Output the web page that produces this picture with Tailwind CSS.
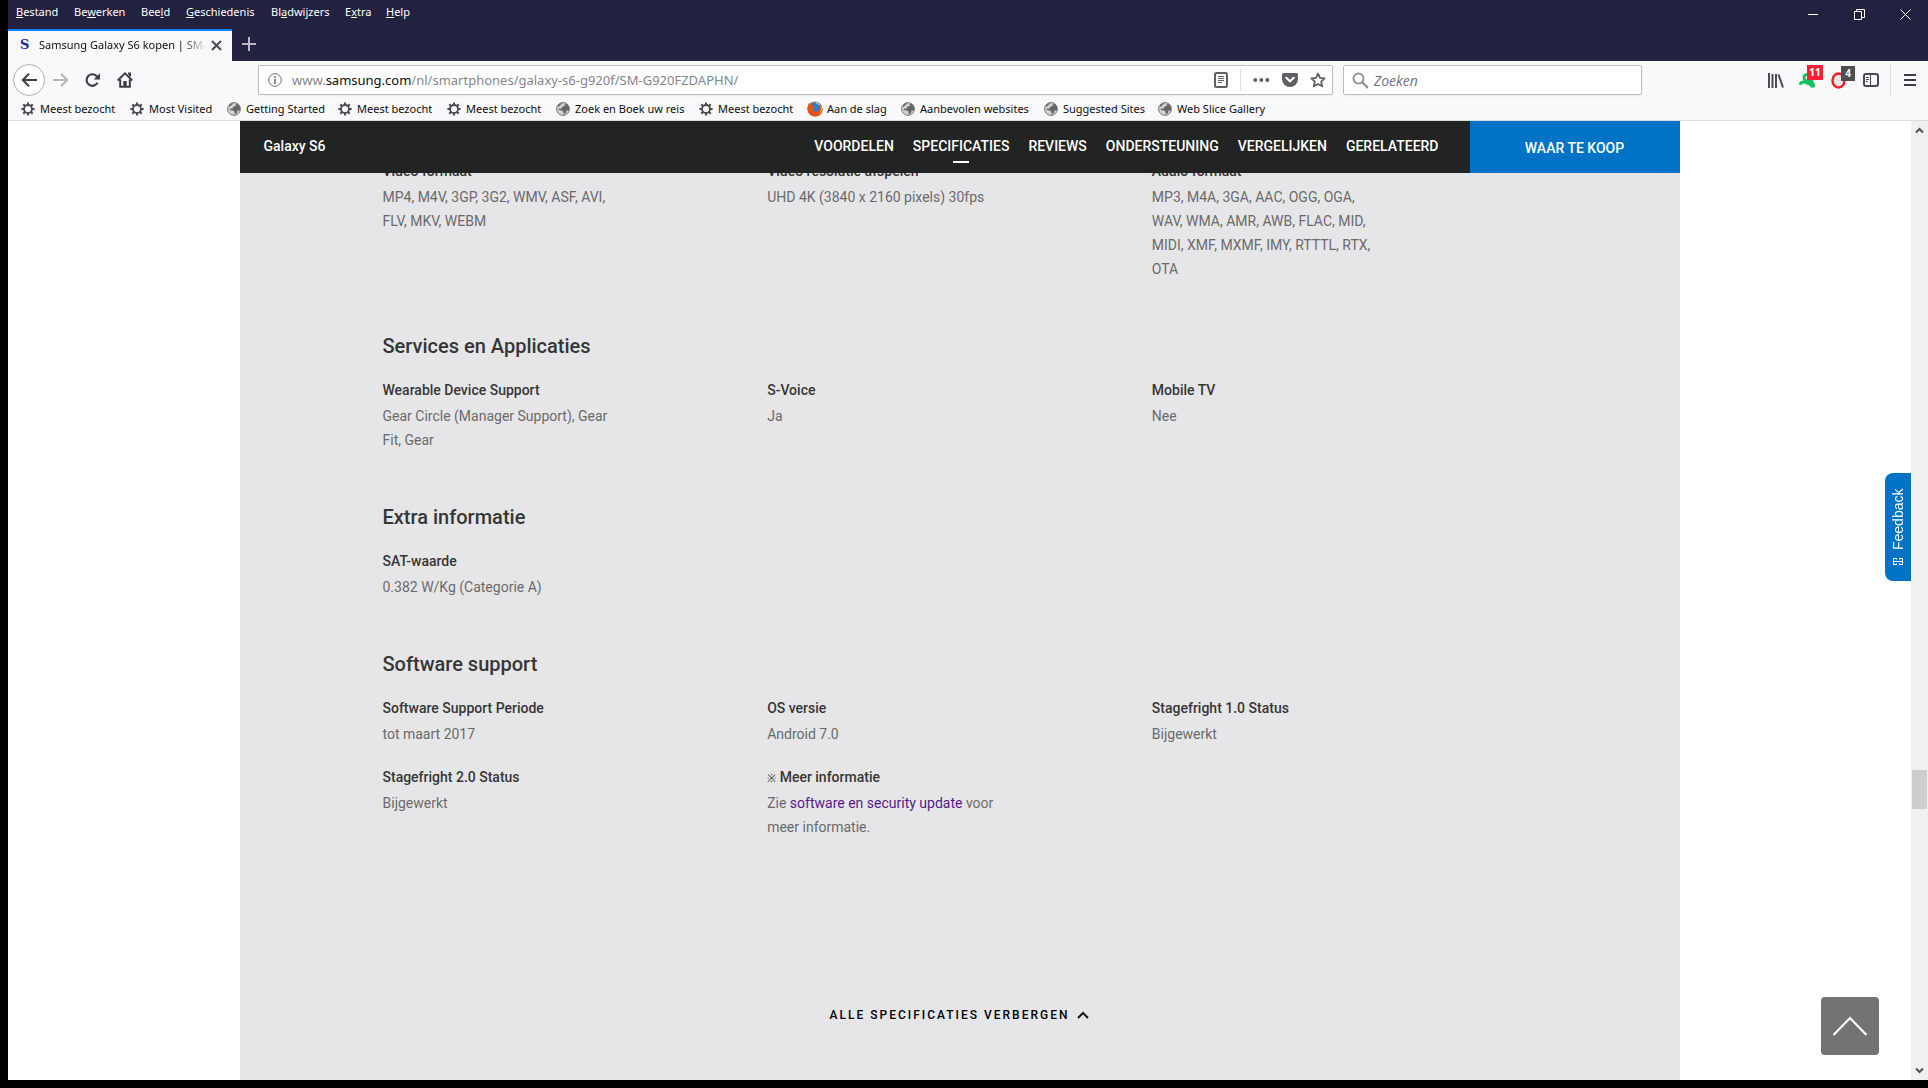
<!DOCTYPE html>
<html lang="nl">
<head>
<meta charset="utf-8">
<title>Samsung Galaxy S6 kopen | SM-G920FZDAPHN</title>
<script src="https://cdn.jsdelivr.net/npm/@tailwindcss/browser@4"></script>
</head>
<body class="bg-black">
<svg class="hidden">
  <symbol id="gear" viewBox="0 0 14 14"><circle cx="7" cy="7" r="4" fill="none" stroke="#4a4a4f" stroke-width="1.8"/><path d="M7 .4v2.4M7 11.2v2.4M.4 7h2.4M11.2 7h2.4M2.3 2.3L4 4M10 10l1.700 1.700M2.300 11.700L4 10M10 4l1.700-1.700" stroke="#4a4a4f" stroke-width="2"/></symbol>
  <symbol id="globe" viewBox="0 0 14 14"><circle cx="7" cy="7" r="6.400" fill="#d2d2d2" stroke="#777" stroke-width="1"/><path d="M2 3.500C3.500 1.500 5 .9 6.500 1L5 2.500 3.500 4 2 5zM8.500 2.500l2-1 2.500 3.300v4l-2.500-.3-.5 2.600-2.500 1.600L7.800 10 6 8.600 2.500 8 3 6.800 5.500 6.600 6.500 4.500 8.800 4z" fill="#666"/></symbol>
  <symbol id="firefox" viewBox="0 0 16 16"><circle cx="8" cy="8" r="7.600" fill="#e8641b"/><circle cx="8.500" cy="6.500" r="5.600" fill="#2f7fc4"/><path d="M8 1c3 0 5 2 5.500 4L10 3z" fill="#8fd0f0"/><path d="M.8 5C1 3.500 2 2.300 2.600 1.800c0 1 .4 1.600 1 2 1-.3 2 0 2.600.6-1 .8-.6 1.800.8 1.800-.8 2-1.600 1.800-1.300 2.900.7 2.100 4.200 2 5.800.3 1.500-1.600 1.500-3.800 1-5.400C16 7 16.300 10 14 13c-2.500 3-7.500 3.200-10.500.8C.5 11.500.1 8 .8 5z" fill="#e2531a"/><path d="M14.800 5c.8 3-.3 6.500-3 8 2-2.500 2.400-4.500 2-7z" fill="#ffc23c"/></symbol>
</svg>
<div class="flex h-screen flex-col overflow-hidden bg-black pb-2 pl-2 font-['Noto_Sans',sans-serif] text-[11px]">
  <header class="shrink-0 bg-[#222140]">
    <div class="flex h-[29px] items-start justify-between">
      <nav aria-label="Menubalk" class="grid h-6 grid-cols-[58px_67px_45px_85px_74px_41px_auto] items-center pl-2 text-white">
        <button class="text-left whitespace-nowrap"><u>B</u>estand</button>
        <button class="text-left whitespace-nowrap">Be<u>w</u>erken</button>
        <button class="text-left whitespace-nowrap">Bee<u>l</u>d</button>
        <button class="text-left whitespace-nowrap"><u>G</u>eschiedenis</button>
        <button class="text-left whitespace-nowrap">Bl<u>a</u>dwijzers</button>
        <button class="text-left whitespace-nowrap">E<u>x</u>tra</button>
        <button class="text-left whitespace-nowrap"><u>H</u>elp</button>
      </nav>
      <div class="flex h-7 items-center">
        <button aria-label="Minimaliseren" class="flex w-[46px] justify-center"><svg width="10" height="10"><path d="M0 5.500h10" stroke="#fff"/></svg></button>
        <button aria-label="Verkleinen" class="flex w-[46px] justify-center"><svg width="11" height="11" fill="none" stroke="#fff"><path d="M.5 2.500h7v8h-7zM2.500 2.500v-2h8v8h-3"/></svg></button>
        <button aria-label="Sluiten" class="flex w-[46px] justify-center"><svg width="11" height="11"><path d="M.5.5l10 10M10.500.5l-10 10" stroke="#fff"/></svg></button>
      </div>
    </div>
    <div class="flex h-8">
      <div class="flex w-56 items-center border-t-2 border-[#0a84ff] bg-[#f9f9fb] pr-[10px] pb-0.5 pl-3">
        <span class="w-[19px] shrink-0 font-['DejaVu_Serif',serif] text-[13px] font-bold text-[#1428a0]">S</span>
        <span class="min-w-0 flex-1 overflow-hidden bg-linear-to-r from-[#0c0c0d] from-85% to-transparent bg-clip-text whitespace-nowrap text-transparent">Samsung Galaxy S6 kopen | SM-</span>
        <button aria-label="Tabblad sluiten" class="ml-1"><svg width="11" height="11"><path d="M1 1l9 9M10 1l-9 9" stroke="#4a4a4f" stroke-width="2"/></svg></button>
      </div>
      <button aria-label="Nieuw tabblad" class="flex w-[34px] items-center justify-center pb-0.5"><svg width="14" height="14"><path d="M7 0v14M0 7h14" stroke="#b9b9c6" stroke-width="2"/></svg></button>
    </div>
  </header>
  <div class="shrink-0 border-b border-[#dcdcdf] bg-[#f9f9fb] text-[#0c0c0d]">
    <div class="flex h-[38px] items-center pr-3 pl-[5px]">
      <button aria-label="Terug" class="flex size-8 items-center justify-center rounded-full border border-[#b1b1b3] bg-white"><svg width="17" height="14" fill="none" stroke="#3e3e42" stroke-width="2"><path d="M16 7H1.500M8 .800L1.800 7 8 13.200"/></svg></button>
      <button aria-label="Vooruit" class="ml-2 flex w-4 justify-center"><svg width="16" height="14" fill="none" stroke="#b5b5b8" stroke-width="2"><path d="M0 7h14.500M8 .800L14.200 7 8 13.200"/></svg></button>
      <button aria-label="Vernieuwen" class="ml-4 flex w-4 justify-center"><svg width="16" height="14" fill="none" stroke="#3e3e42" stroke-width="2.200"><path d="M12.500 9.800A5.800 5.800 0 1 1 12 3.500"/><path d="M15 .2v6.300H8.700z" fill="#3e3e42" stroke="none"/></svg></button>
      <button aria-label="Startpagina" class="ml-4 flex w-4 justify-center"><svg width="16" height="16" fill="none" stroke="#3e3e42" stroke-width="2"><path d="M.7 8.500L8 1.400l7.300 7.100M3.200 7.500V14.800h9.600V7.500"/><path d="M11 1.500h2v3" /><path d="M6.300 9h3.400v5.500H6.300z" fill="#3e3e42" stroke="none"/></svg></button>
      <div class="ml-[125px] flex h-[30px] flex-1 items-center rounded-xs border border-[#bdbdbf] bg-white pr-1.5 pl-[9px] shadow-xs">
        <svg width="14" height="14" fill="none" stroke="#6e6e72"><circle cx="7" cy="7" r="6.300"/><path d="M7 6v5M7 3v1.800" stroke-width="1.600"/></svg>
        <div class="ml-2.5 flex-1 pt-0.5 text-[13px] whitespace-nowrap text-[#85858a]">www.<span class="text-[#0c0c0d]">samsung.com</span>/nl/smartphones/galaxy-s6-g920f/SM-G920FZDAPHN/</div>
        <button aria-label="Lezerweergave"><svg width="14" height="16" fill="none" stroke="#5f5f64"><rect x="1" y="1" width="12" height="14" rx="1.500" stroke-width="2"/><path d="M4 4.500h6M4 6.500h6M4 8.500h6M4 10.500h4"/></svg></button>
        <span class="mx-3 h-[22px] w-px bg-[#dcdcdf]"></span>
        <button aria-label="Paginaacties"><svg width="17" height="16" fill="#5f5f64"><circle cx="2.300" cy="8" r="2"/><circle cx="8.300" cy="8" r="2"/><circle cx="14.300" cy="8" r="2"/></svg></button>
        <button aria-label="Opslaan in Pocket" class="ml-3"><svg width="16" height="14"><path d="M1.500 0h13Q16 0 16 1.500V6A8 8 0 0 1 0 6V1.500Q0 0 1.500 0z" fill="#5f5f64"/><path d="M4.300 4.800L8 8.300l3.700-3.500" fill="none" stroke="#fff" stroke-width="2" stroke-linecap="round"/></svg></button>
        <button aria-label="Bladwijzer maken" class="ml-3"><svg width="16" height="16"><path d="M8 1.600l2 4.200 4.600.6-3.400 3.200.9 4.700L8 12l-4.100 2.300.9-4.700L1.400 6.400 6 5.800z" fill="none" stroke="#5f5f64" stroke-width="1.800" stroke-linejoin="round"/></svg></button>
      </div>
      <label class="ml-[10px] flex h-[30px] w-[299px] items-center rounded-xs border border-[#bdbdbf] bg-white pl-2 shadow-xs">
        <svg width="17" height="17" fill="none" stroke="#929296" stroke-width="2"><circle cx="6.500" cy="6.500" r="5"/><path d="M10 10l6 6" stroke-width="2.400"/></svg>
        <input type="search" aria-label="Zoeken" placeholder="Zoeken" class="ml-1.5 w-full bg-transparent font-['Open_Sans',sans-serif] text-[14px] italic outline-none placeholder:text-[#737378]">
      </label>
      <div class="ml-[126px] flex items-center">
        <button aria-label="Bibliotheek" class="w-[31px]"><svg width="16" height="15" stroke="#4a4a4f" stroke-width="2"><path d="M1 0v15M4.500 1v14M8 1v14M10.500 1.500L15 14.500"/></svg></button>
        <button aria-label="Extensie" class="relative w-8"><svg width="18" height="16"><path d="M8 2.500C5 2.500 4.500 5 5.500 7.500L7.500 11M1.500 11.500c2-2.500 4.500-1.500 7-.5 2 .8 3.500 1.500 5 2.500M9 8l4 1.500" fill="none" stroke="#14c15a" stroke-width="3" stroke-linecap="round"/><circle cx="13.500" cy="13" r="2.700" fill="#14c15a"/></svg><span class="absolute -top-[7px] left-2 h-[15px] w-4 bg-[#fb1f35] text-center text-[10px] leading-[15px] font-bold text-white">11</span></button>
        <button aria-label="Adblocker" class="relative w-8"><svg width="17" height="17"><ellipse cx="7.500" cy="8.500" rx="6" ry="7" fill="#e8e8e8" stroke="#ee2029" stroke-width="2.500"/></svg><span class="absolute -top-[6px] left-[10px] h-[15px] w-[14px] bg-[#4f4f4f] text-center text-[10px] leading-[15px] font-bold text-white">4</span></button>
        <button aria-label="Zijbalk"><svg width="16" height="14" fill="none" stroke="#4a4a4f"><rect x="1" y="1" width="14" height="12" rx="2" stroke-width="2"/><path d="M7.500 1v12"/><path d="M3 4.500h3M3 6.500h3M3 8.500h2"/></svg></button>
        <span class="mx-[11px] h-8 w-px bg-[#dcdcdf]"></span>
        <button aria-label="Menu" class="ml-0.5"><svg width="12" height="12" stroke="#3e3e42" stroke-width="2"><path d="M0 1h12M0 6h12M0 11h12"/></svg></button>
      </div>
    </div>
    <nav aria-label="Bladwijzers" class="grid h-[21px] grid-cols-[109px_97px_111px_109px_109px_143px_108px_94px_143px_114px_auto] items-center pb-px pl-[13px] whitespace-nowrap">
      <a href="#" class="flex items-center gap-[5px]"><svg class="size-3.5"><use href="#gear"/></svg>Meest bezocht</a>
      <a href="#" class="flex items-center gap-[5px]"><svg class="size-3.5"><use href="#gear"/></svg>Most Visited</a>
      <a href="#" class="flex items-center gap-[5px]"><svg class="size-3.5"><use href="#globe"/></svg>Getting Started</a>
      <a href="#" class="flex items-center gap-[5px]"><svg class="size-3.5"><use href="#gear"/></svg>Meest bezocht</a>
      <a href="#" class="flex items-center gap-[5px]"><svg class="size-3.5"><use href="#gear"/></svg>Meest bezocht</a>
      <a href="#" class="flex items-center gap-[5px]"><svg class="size-3.5"><use href="#globe"/></svg>Zoek en Boek uw reis</a>
      <a href="#" class="flex items-center gap-[5px]"><svg class="size-3.5"><use href="#gear"/></svg>Meest bezocht</a>
      <a href="#" class="flex items-center gap-1"><svg class="size-4"><use href="#firefox"/></svg>Aan de slag</a>
      <a href="#" class="flex items-center gap-[5px]"><svg class="size-3.5"><use href="#globe"/></svg>Aanbevolen websites</a>
      <a href="#" class="flex items-center gap-[5px]"><svg class="size-3.5"><use href="#globe"/></svg>Suggested Sites</a>
      <a href="#" class="flex items-center gap-[5px]"><svg class="size-3.5"><use href="#globe"/></svg>Web Slice Gallery</a>
    </nav>
  </div>
  <div class="relative flex min-h-0 flex-1 bg-white">
    <div class="min-w-0 flex-1 overflow-hidden font-[Roboto,sans-serif] text-[14px]">
      <main class="mx-auto h-full max-w-[1440px] bg-[#e6e6e8]">
        <nav aria-label="Productnavigatie" class="relative z-10 flex h-[52px] bg-[#222423] leading-5 font-medium text-white">
          <a href="#" class="flex h-[50px] items-center pl-6">Galaxy S6</a>
          <div class="ml-auto flex h-[50px] items-center gap-[19px] pr-[31px]">
            <a href="#">VOORDELEN</a>
            <a href="#" class="relative">SPECIFICATIES<span class="absolute top-[25px] left-1/2 h-0.5 w-4 -translate-x-1/2 bg-white"></span></a>
            <a href="#">REVIEWS</a>
            <a href="#">ONDERSTEUNING</a>
            <a href="#">VERGELIJKEN</a>
            <a href="#">GERELATEERD</a>
          </div>
          <button class="flex w-[210px] items-center justify-center bg-[#0073c6] pt-0.5">WAAR TE KOOP</button>
        </nav>
        <div class="-mt-3.5 px-[143px] leading-6 text-[#6a6a6c]">
          <section class="mb-[49px]">
            <dl class="grid grid-cols-3">
              <div><dt class="mb-0.5 font-medium text-[#363636]">Video formaat</dt><dd class="w-[224px]">MP4, M4V, 3GP, 3G2, WMV, ASF, AVI, FLV, MKV, WEBM</dd></div>
              <div><dt class="mb-0.5 font-medium text-[#363636]">Video resolutie afspelen</dt><dd class="w-[224px]">UHD 4K (3840 x 2160 pixels) 30fps</dd></div>
              <div><dt class="mb-0.5 font-medium text-[#363636]">Audio formaat</dt><dd class="w-[224px]">MP3, M4A, 3GA, AAC, OGG, OGA, WAV, WMA, AMR, AWB, FLAC, MID, MIDI, XMF, MXMF, IMY, RTTTL, RTX, OTA</dd></div>
            </dl>
          </section>
          <section class="mb-[49px]">
            <h2 class="mb-4 text-[20px] leading-8 font-medium text-[#363636]">Services en Applicaties</h2>
            <dl class="grid grid-cols-3">
              <div><dt class="mb-0.5 font-medium text-[#363636]">Wearable Device Support</dt><dd class="w-[230px]">Gear Circle (Manager Support), Gear Fit, Gear</dd></div>
              <div><dt class="mb-0.5 font-medium text-[#363636]">S-Voice</dt><dd>Ja</dd></div>
              <div><dt class="mb-0.5 font-medium text-[#363636]">Mobile TV</dt><dd>Nee</dd></div>
            </dl>
          </section>
          <section class="mb-[49px]">
            <h2 class="mb-4 text-[20px] leading-8 font-medium text-[#363636]">Extra informatie</h2>
            <dl class="grid grid-cols-3">
              <div><dt class="mb-0.5 font-medium text-[#363636]">SAT-waarde</dt><dd>0.382 W/Kg (Categorie A)</dd></div>
            </dl>
          </section>
          <section>
            <h2 class="mb-4 text-[20px] leading-8 font-medium text-[#363636]">Software support</h2>
            <dl class="grid grid-cols-3 gap-y-[19px]">
              <div><dt class="mb-0.5 font-medium text-[#363636]">Software Support Periode</dt><dd>tot maart 2017</dd></div>
              <div><dt class="mb-0.5 font-medium text-[#363636]">OS versie</dt><dd>Android 7.0</dd></div>
              <div><dt class="mb-0.5 font-medium text-[#363636]">Stagefright 1.0 Status</dt><dd>Bijgewerkt</dd></div>
              <div><dt class="mb-0.5 font-medium text-[#363636]">Stagefright 2.0 Status</dt><dd>Bijgewerkt</dd></div>
              <div><dt class="mb-0.5 font-medium text-[#363636]"><span class="text-[11px] leading-none">※</span> Meer informatie</dt><dd class="w-[230px]">Zie <a href="#" class="text-[#551a8b]">software en security update</a> voor meer informatie.</dd></div>
            </dl>
          </section>
          <button class="mx-auto mt-[164px] flex items-center gap-2 text-[12px] font-medium tracking-[2px] text-black">ALLE SPECIFICATIES VERBERGEN <svg width="12" height="8"><path d="M1 7l5-5 5 5" fill="none" stroke="#111" stroke-width="2"/></svg></button>
        </div>
      </main>
    </div>
    <div class="flex w-[17px] shrink-0 flex-col items-center bg-[#f0f0f0] py-1.5">
      <svg width="9" height="7"><path d="M1 5.500L4.500 2 8 5.500" fill="none" stroke="#505050" stroke-width="2"/></svg>
      <div class="flex-[636]"></div>
      <div class="h-[39px] w-[15px] bg-[#cdcdcd]"></div>
      <div class="flex-[258]"></div>
      <svg width="9" height="7"><path d="M1 1.500L4.500 5 8 1.500" fill="none" stroke="#505050" stroke-width="2"/></svg>
    </div>
    <button class="absolute top-[352px] right-[17px] flex h-[108px] w-[26px] rotate-180 items-center justify-center gap-2 rounded-r-lg bg-[#0073c6] font-['Liberation_Sans',sans-serif] text-[14px] text-white [writing-mode:vertical-rl]"><svg width="10" height="7" fill="none" stroke="#fff"><path d="M0 .5h3.500M6.500.5H10M0 6.500h3.500M6.500 6.500H10M.5 0v7M9.500 0v7M0 3.500h10M3.500 0v1.500M6.500 0v1.500M3.500 5.500v1.500M6.500 5.500v1.500"/></svg>Feedback</button>
    <button aria-label="Naar boven" class="absolute right-[49px] bottom-[25px] flex size-[58px] items-center justify-center rounded-sm bg-[#737373]"><svg width="36" height="22"><path d="M1.500 20L18 3l16.500 17" fill="none" stroke="#fff" stroke-width="2.200"/></svg></button>
  </div>
</div>
</body>
</html>
